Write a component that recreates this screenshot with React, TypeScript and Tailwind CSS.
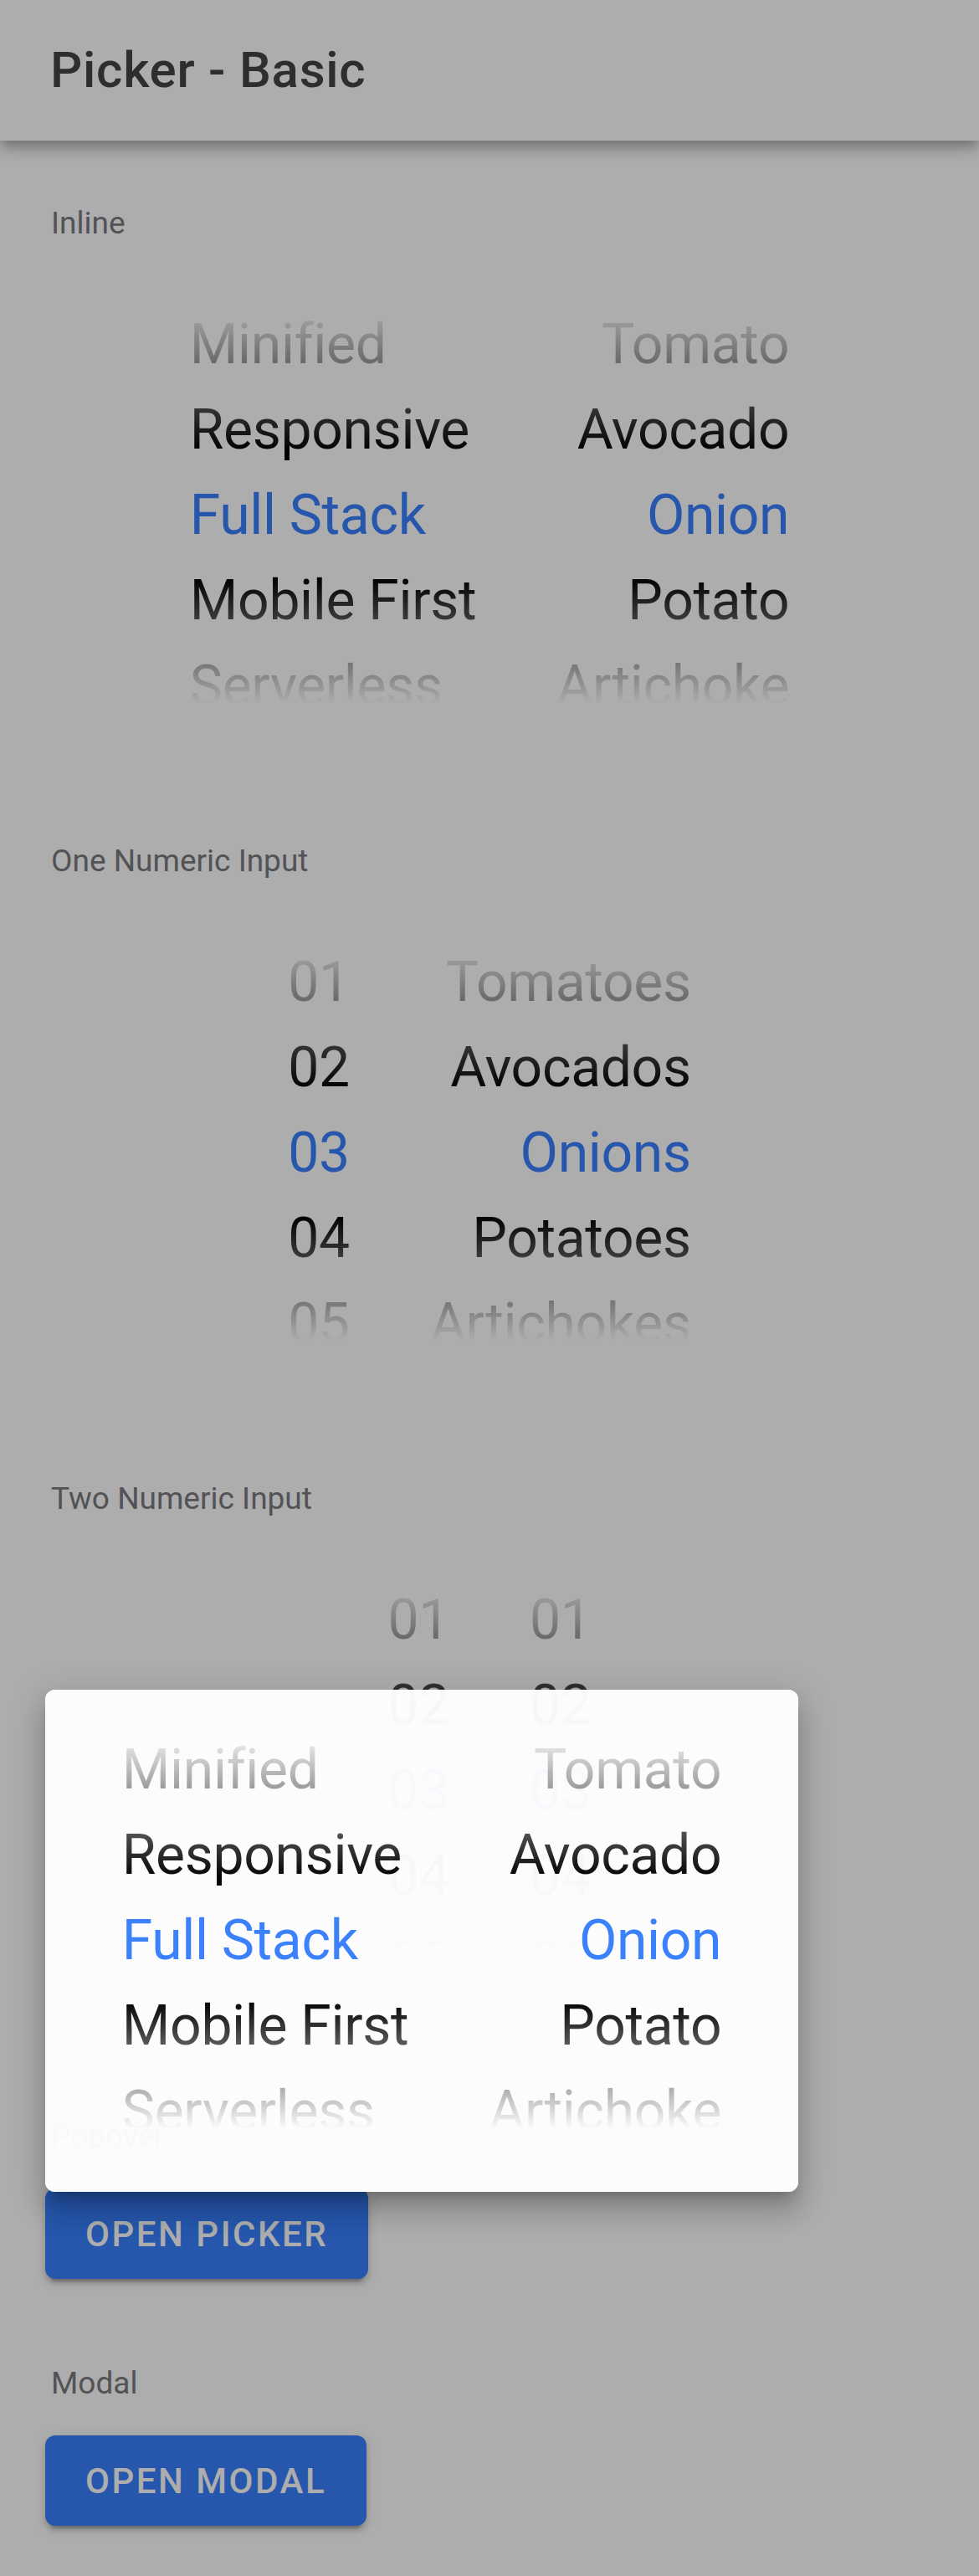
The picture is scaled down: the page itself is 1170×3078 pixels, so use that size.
import clsx from "clsx";

type Column = { items: string[]; align: "start" | "end" };

const INLINE: Column[] = [
  { items: ["Minified", "Responsive", "Full Stack", "Mobile First", "Serverless"], align: "start" },
  { items: ["Tomato", "Avocado", "Onion", "Potato", "Artichoke"], align: "end" },
];

const NUMS = ["01", "02", "03", "04", "05"];

const ONE_NUMERIC: Column[] = [
  { items: NUMS, align: "start" },
  { items: ["Tomatoes", "Avocados", "Onions", "Potatoes", "Artichokes"], align: "end" },
];

const TWO_NUMERIC: Column[] = [
  { items: NUMS, align: "start" },
  { items: NUMS, align: "start" },
];

function Picker({ columns }: { columns: Column[] }) {
  return (
    <div className="relative flex h-[600px] justify-center overflow-hidden">
      {columns.map((col, ci) => (
        <div
          key={ci}
          className={clsx("flex flex-col px-[48px] pt-[45px]", col.align === "end" ? "items-end" : "items-start")}
        >
          {col.items.map((it, i) => (
            <div
              key={it}
              className={clsx(
                "h-[102px] whitespace-nowrap text-[66px] leading-[102px] tracking-[-0.005em]",
                i === 2 ? "text-[#3880ff]" : "text-black",
              )}
            >
              {it}
            </div>
          ))}
        </div>
      ))}
      <div className="pointer-events-none absolute inset-x-0 top-0 h-[249px] bg-[linear-gradient(to_bottom,#fff_20%,rgba(255,255,255,0)_90%)]" />
      <div className="pointer-events-none absolute inset-x-0 top-[348px] h-[252px] bg-[linear-gradient(to_top,#fff_30%,rgba(255,255,255,0)_90%)]" />
    </div>
  );
}

function Label({ children, className }: { children: React.ReactNode; className?: string }) {
  return <p className={clsx("ml-[13px] text-[37px] leading-[36px] text-[#7a7a80]", className)}>{children}</p>;
}

function Button({ children }: { children: React.ReactNode }) {
  return (
    <div className="ml-[6px] mt-[44px] flex">
      <button className="flex h-[108px] items-center rounded-[12px] bg-[#3880ff] px-[48px] text-[42px] font-medium uppercase tracking-[0.06em] text-white shadow-[0_9px_3px_-6px_rgba(0,0,0,0.2),0_6px_6px_0_rgba(0,0,0,0.14),0_3px_15px_0_rgba(0,0,0,0.12)]">
        {children}
      </button>
    </div>
  );
}

export default function App() {
  return (
    <div className="relative min-h-[3078px] w-full overflow-hidden bg-white font-[Roboto,sans-serif]">
      <header className="relative z-10 flex h-[168px] items-center bg-white pl-[60px] shadow-[0_6px_12px_-3px_rgba(0,0,0,0.2),0_12px_15px_0_rgba(0,0,0,0.14),0_3px_30px_0_rgba(0,0,0,0.12)]">
        <h1 className="text-[60px] font-medium leading-[72px] tracking-[0.0125em] text-[#444]">Picker - Basic</h1>
      </header>

      <main className="flex flex-col px-[48px]">
        <Label className="mt-[81px]">Inline</Label>
        <div className="mt-[31px]">
          <Picker columns={INLINE} />
        </div>

        <Label className="mt-[95px]">One Numeric Input</Label>
        <div className="mt-[31px]">
          <Picker columns={ONE_NUMERIC} />
        </div>

        <Label className="mt-[95px]">Two Numeric Input</Label>
        <div className="mt-[31px]">
          <Picker columns={TWO_NUMERIC} />
        </div>

        <Label className="mt-[95px]">Popover</Label>
        <Button>Open Picker</Button>

        <Label className="mt-[107px]">Modal</Label>
        <Button>Open Modal</Button>
      </main>

      {/* backdrop */}
      <div className="absolute inset-0 z-20 bg-[rgba(0,0,0,0.32)]" />

      {/* popover, mid fade-in */}
      <div className="absolute left-[54px] top-[2019px] z-30 h-[600px] w-[900px] overflow-hidden rounded-[12px] bg-white opacity-[0.97] shadow-[0_15px_15px_-9px_rgba(0,0,0,0.2),0_24px_30px_3px_rgba(0,0,0,0.14),0_9px_42px_6px_rgba(0,0,0,0.12)]">
        <Picker columns={INLINE} />
      </div>
    </div>
  );
}
